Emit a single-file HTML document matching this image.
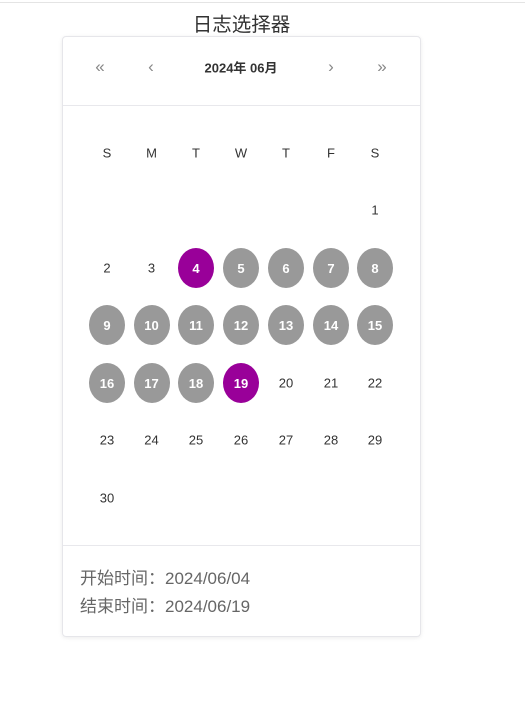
<!DOCTYPE html><html><head><meta charset="utf-8"><style>
body{margin:0;width:525px;height:718px;background:#fff;font-family:"Liberation Sans","Noto Sans CJK SC",sans-serif;position:relative;overflow:hidden}
.top{position:absolute;left:0;right:0;top:2px;height:1px;background:#e4e4e4}
.title{position:absolute;left:0;width:483px;top:8px;text-align:center;font-size:19.5px;color:#333}
.card{position:absolute;left:62px;top:36px;width:357px;height:599px;border:1px solid #e6e6ea;border-radius:4px;box-shadow:0 1px 4px rgba(0,0,0,.08)}
.hl{position:absolute;left:0;right:0;height:1px;background:#e8e8ec}
.t{position:absolute;transform:translate(-50%,-50%);font-size:13px;color:#333;white-space:nowrap}
.c{position:absolute;width:36px;height:40px;border-radius:50%;transform:translate(-50%,-50%);display:flex;align-items:center;justify-content:center;color:#fff;font-size:13px;font-weight:bold;background:#999}
.p{background:#990099}
.nav{color:#888;font-size:16px}
.f{position:absolute;left:17px;font-size:17px;color:#666}
</style></head><body>
<div class="top"></div>
<div class="title">日志选择器</div>
<div class="card">
<div class="hl" style="top:68px"></div>
<div class="hl" style="top:508px"></div>
<div class="f" style="top:527px">开始时间：2024/06/04</div>
<div class="f" style="top:555px">结束时间：2024/06/19</div>
</div>
<div id="g"></div>
<script>
var g=document.getElementById('g'),h='';
var xs=[107,151.5,196,241,286,331,375];
function t(x,y,s,cls,st){h+='<div class="'+cls+'" style="left:'+x+'px;top:'+y+'px;'+(st||'')+'">'+s+'</div>';}
t(100,67,'«','t nav','font-size:17px');t(151,67,'‹','t nav','font-size:17px');
t(241,67,'2024年 06月','t','font-weight:bold');
t(331,67,'›','t nav','font-size:17px');t(382,67,'»','t nav','font-size:17px');
'SMTWTFS'.split('').forEach(function(d,i){t(xs[i],153,d,'t');});
var ys=[210,268,325,383,440,498];
for(var d=1;d<=30;d++){var idx=d+5,r=Math.floor(idx/7),c=idx%7;
var cls='t';if(d==4||d==19)cls='c p';else if(d>4&&d<19)cls='c';
t(xs[c],ys[r],d,cls);}
g.innerHTML=h;
</script>
</body></html>
